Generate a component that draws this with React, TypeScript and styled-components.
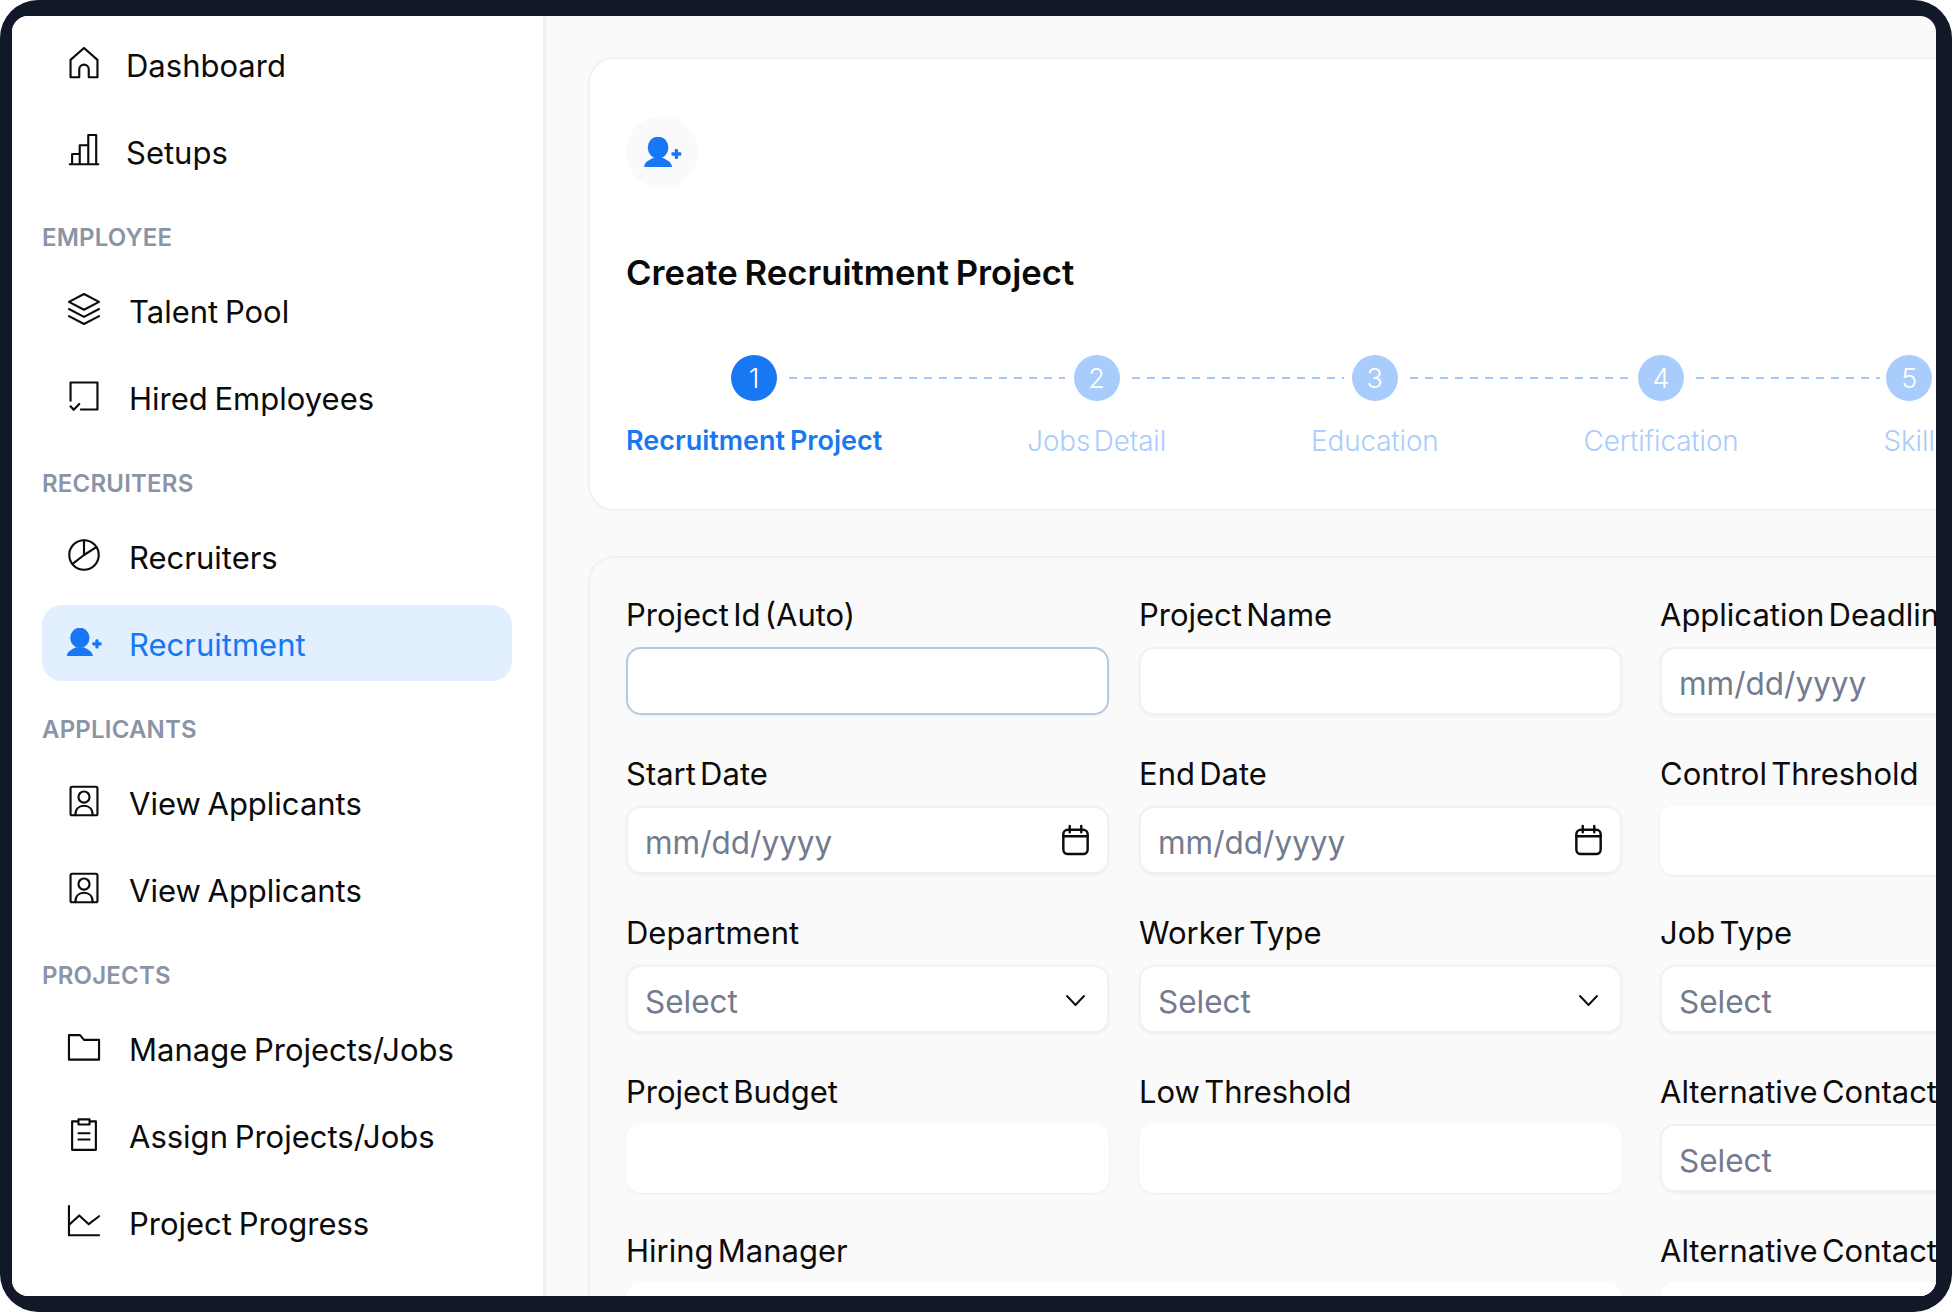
import React from "react";
import styled, { createGlobalStyle } from "styled-components";

const Global = createGlobalStyle`
  html, body { margin: 0; padding: 0; background: #fff; }
  body { font-family: Inter, "Noto Sans", "Liberation Sans", sans-serif; overflow: hidden; }
  * { box-sizing: border-box; }
`;

const Frame = styled.div`
  width: 1952px; height: 1312px; background: #111827; border-radius: 38px;
  padding: 16px 16px 16px 12px;
`;
const Screen = styled.div`
  display: flex; width: 100%; height: 100%; overflow: hidden; border-radius: 16px; background: #fafafa;
`;
const Sidebar = styled.nav`
  flex: none; width: 534px; height: 100%; background: #fff; border-right: 3px solid #eef1f6;
  padding: 10px 31px 0 30px; display: flex; flex-direction: column; gap: 11.04px; overflow: hidden;
`;
const NavRow = styled.div<{ $active?: boolean; $tight?: boolean }>`
  flex: none; height: 76px; display: flex; align-items: center; padding: 4px 0 0 23px;
  gap: ${(p) => (p.$tight ? "23px" : "26px")};
  border-radius: 20px; background: ${(p) => (p.$active ? "#e1effe" : "transparent")};
  color: ${(p) => (p.$active ? "#1877f2" : "#0b0b0b")};
  font-size: 31px; line-height: 36px; word-spacing: -2px;
`;
const NavIcon = styled.span`
  flex: none; width: 38px; height: 38px; display: flex; align-items: center; justify-content: center;
  margin-top: -6px;
`;
const Heading = styled.div`
  height: 30px; line-height: 30px; font-size: 24px; font-weight: 600; color: #8a94a6;
  margin: 23px 0 8px; letter-spacing: 0.2px;
`;

const Main = styled.main`
  flex: 1; min-width: 0; height: 100%; overflow: hidden; padding: 41px 0 0 42px; display: flex; flex-direction: column; gap: 45px;
`;
const HeaderCard = styled.section`
  flex: none; width: 1500px; height: 454px; background: #fff; border: 2.5px solid #eef1f6; border-radius: 26px;
  padding: 57px 0 0 36px;
`;
const Avatar = styled.div`
  width: 72px; height: 72px; border-radius: 50%; background: #f9fafb; display: flex; align-items: center; justify-content: center;
`;
const Title = styled.h1`
  margin: 62px 0 0; font-size: 34.7px; line-height: 44px; font-weight: 600; color: #0a0a0a; word-spacing: -2px;
`;
const Stepper = styled.div`
  display: flex; gap: 145px; margin-top: 61px;
`;
const Step = styled.div<{ $line?: number }>`
  position: relative; flex: none; display: flex; flex-direction: column; align-items: center; gap: 20px;
  &::after {
    content: ${(p) => (p.$line ? '""' : "none")};
    position: absolute; top: 22px; left: calc(50% + 35px); height: 2px; width: ${(p) => p.$line}px;
    background: repeating-linear-gradient(90deg, #a3c9fb 0 8px, transparent 8px 15px);
  }
`;
const StepDot = styled.div<{ $on?: boolean }>`
  width: 46px; height: 46px; border-radius: 50%; display: flex; align-items: center; justify-content: center;
  background: ${(p) => (p.$on ? "#1877f2" : "#a8ccfb")}; color: #fff; font-size: 27px; font-weight: 300;
`;
const StepLabel = styled.div<{ $on?: boolean }>`
  font-size: ${(p) => (p.$on ? "27px" : "27.8px")}; line-height: 40px; white-space: nowrap;
  word-spacing: ${(p) => (p.$on ? "-2px" : "-4px")}; letter-spacing: ${(p) => (p.$on ? "0" : "-0.1px")};
  color: ${(p) => (p.$on ? "#1877f2" : "#a8ccfb")}; font-weight: ${(p) => (p.$on ? 600 : 300)};
`;

const FormCard = styled.section`
  flex: none; width: 1600px; height: 900px; background: #fafafa; border: 2.5px solid #eef1f6; border-radius: 26px;
  padding: 38px 0 0 36px; display: flex; gap: 39px; align-items: flex-start;
`;
const LeftFields = styled.div`
  flex: none; width: 995px; display: grid; grid-template-columns: 483px 483px; column-gap: 30px; row-gap: 40px;
`;
const RightFields = styled.div`
  flex: none; width: 483px; display: flex; flex-direction: column; gap: 40px;
`;
const Field = styled.div<{ $wide?: boolean }>`
  display: flex; flex-direction: column; gap: 13px; min-width: 0;
  grid-column: ${(p) => (p.$wide ? "1 / span 2" : "auto")};
`;
const Label = styled.label`
  display: block; font-size: 31px; line-height: 38px; color: #0b0b0b; white-space: nowrap; word-spacing: -4.5px;
`;
const Control = styled.div<{ $focus?: boolean; $bare?: boolean }>`
  height: ${(p) => (p.$bare ? "70px" : "68px")};
  margin: ${(p) => (p.$bare ? "-1px 0" : "0")};
  display: flex; align-items: center; justify-content: space-between; padding: 5px 18px 0 17px;
  background: #fff; border-radius: 15px;
  border: 2px solid ${(p) => (p.$bare ? "#fff" : p.$focus ? "#b6c9e3" : "#eef1f6")};
  box-shadow: 0 1px 3px rgba(30, 50, 90, 0.07);
`;
const Placeholder = styled.span`
  font-size: 31.5px; color: #737b8f; font-weight: 400;
`;
const TrailIcon = styled.svg<{ $up: number }>`
  flex: none; margin-top: ${(p) => -p.$up}px; fill: none; stroke: #0b0b0b; stroke-width: 1.9; stroke-linecap: round; stroke-linejoin: round;
`;
const Line = styled.svg`
  fill: none; stroke: currentColor; stroke-width: 1.35; stroke-linejoin: round; stroke-linecap: round;
`;

const I = ({ children }: { children: React.ReactNode }) => (
  <Line width="38" height="38" viewBox="0 0 24 24">{children}</Line>
);

const UserPlus = ({ w, h }: { w: number; h: number }) => (
  <svg width={w} height={h} viewBox="0 0 34 27" fill="#1877f2">
    <ellipse cx="13" cy="9.500" rx="9.300" ry="9.800" />
    <path d="M0.500 27c0-4.500 5-6.500 9-8.500h7c4 2 9 4 9 8.500z" />
    <rect x="25" y="13.800" width="9" height="3" rx="1" />
    <rect x="28" y="10.800" width="3" height="9" rx="1" />
  </svg>
);

const icons: Record<string, React.ReactNode> = {
  home: <I><path d="M3.500 21V10L12 2.500 20.500 10v11h-5.500v-5a3 3 0 0 0-6 0v5z" /></I>,
  bars: <I><path d="M3 21h18M4.500 21v-6.500H9.300M9.300 21V9h5.400v12M14.700 21V2.500h5V21" /></I>,
  layers: <I><path d="M12 2.500 21.500 7.500 12 12.500 2.500 7.500zM2.500 12 12 17l9.500-5M2.500 16.500 12 21.500l9.500-5" /></I>,
  hired: <I><path d="M3.500 15V3.500h17v17H10M3.500 18.500l2 2.200 3.500-3.700" /></I>,
  pie: <I><circle cx="12" cy="12" r="9.300" /><path d="M12 2.700V12M12 12l7.800-5M12 12l-7 5.500" /></I>,
  person: <I><rect x="3.500" y="3" width="17" height="18" rx="1" /><circle cx="12" cy="9.500" r="3.500" /><path d="M6.500 21c0-4 2.300-6 5.500-6s5.500 2 5.500 6" /></I>,
  folder: <I><path d="M2.500 20V4.500h7L12 7.500h9.500V20z" /></I>,
  clip: <I><path d="M8.500 4H4.500v18h15V4h-4M8.500 2.800h7v3.200h-7zM8.500 11.500h7M8.500 15.500h7" /></I>,
  chart: <I><path d="M2.500 2.500V21h19M3 14l6-5.500 6 5.500 6.500-5" /></I>,
};

const NavItem = ({ icon, text, tight }: { icon: string; text: string; tight?: boolean }) => (
  <NavRow $tight={tight}>
    <NavIcon>{icons[icon]}</NavIcon>
    {text}
  </NavRow>
);

const Calendar = () => (
  <TrailIcon $up={6} width="27" height="32" viewBox="1.500 0 21 25">
    <rect x="2.500" y="4.500" width="19" height="19" rx="3.500" />
    <path d="M2.500 9.500h19M7.500 1.500v5M16.500 1.500v5" />
  </TrailIcon>
);
const Chevron = () => (
  <TrailIcon $up={4} width="27" height="24" viewBox="0 0 24 24">
    <path d="M3.500 8 12 17l8.500-9" />
  </TrailIcon>
);

type Kind = "text" | "date" | "select";
const Input = ({ kind, focus, bare }: { kind: Kind; focus?: boolean; bare?: boolean }) => (
  <Control $focus={focus} $bare={bare}>
    {kind === "date" && <Placeholder>mm/dd/yyyy</Placeholder>}
    {kind === "select" && <Placeholder>Select</Placeholder>}
    {kind === "date" && <Calendar />}
    {kind === "select" && <Chevron />}
  </Control>
);

const steps: { n: number; label: string; line?: number }[] = [
  { n: 1, label: "Recruitment Project", line: 276 },
  { n: 2, label: "Jobs Detail", line: 212 },
  { n: 3, label: "Education", line: 218 },
  { n: 4, label: "Certification", line: 184 },
  { n: 5, label: "Skill" },
];

export default function App() {
  return (
    <Frame>
      <Global />
      <Screen>
        <Sidebar>
          <NavItem icon="home" text="Dashboard" tight />
          <NavItem icon="bars" text="Setups" tight />
          <Heading>EMPLOYEE</Heading>
          <NavItem icon="layers" text="Talent Pool" />
          <NavItem icon="hired" text="Hired Employees" />
          <Heading>RECRUITERS</Heading>
          <NavItem icon="pie" text="Recruiters" />
          <NavRow $active>
            <NavIcon><UserPlus w={36} h={28} /></NavIcon>
            Recruitment
          </NavRow>
          <Heading>APPLICANTS</Heading>
          <NavItem icon="person" text="View Applicants" />
          <NavItem icon="person" text="View Applicants" />
          <Heading>PROJECTS</Heading>
          <NavItem icon="folder" text="Manage Projects/Jobs" />
          <NavItem icon="clip" text="Assign Projects/Jobs" />
          <NavItem icon="chart" text="Project Progress" />
        </Sidebar>
        <Main>
          <HeaderCard>
            <Avatar><UserPlus w={39} h={30} /></Avatar>
            <Title>Create Recruitment Project</Title>
            <Stepper>
              {steps.map((s) => (
                <Step key={s.n} $line={s.line}>
                  <StepDot $on={s.n === 1}>{s.n}</StepDot>
                  <StepLabel $on={s.n === 1}>{s.label}</StepLabel>
                </Step>
              ))}
            </Stepper>
          </HeaderCard>
          <FormCard>
            <LeftFields>
              <Field><Label>Project Id (Auto)</Label><Input kind="text" focus /></Field>
              <Field><Label>Project Name</Label><Input kind="text" /></Field>
              <Field><Label>Start Date</Label><Input kind="date" /></Field>
              <Field><Label>End Date</Label><Input kind="date" /></Field>
              <Field><Label>Department</Label><Input kind="select" /></Field>
              <Field><Label>Worker Type</Label><Input kind="select" /></Field>
              <Field><Label>Project Budget</Label><Input kind="text" bare /></Field>
              <Field><Label>Low Threshold</Label><Input kind="text" bare /></Field>
              <Field $wide><Label>Hiring Manager</Label><Input kind="text" bare /></Field>
            </LeftFields>
            <RightFields>
              <Field><Label>Application Deadline</Label><Input kind="date" /></Field>
              <Field><Label>Control Threshold</Label><Input kind="text" bare /></Field>
              <Field><Label>Job Type</Label><Input kind="select" /></Field>
              <Field><Label>Alternative Contact</Label><Input kind="select" /></Field>
              <Field><Label>Alternative Contact</Label><Input kind="text" bare /></Field>
            </RightFields>
          </FormCard>
        </Main>
      </Screen>
    </Frame>
  );
}
